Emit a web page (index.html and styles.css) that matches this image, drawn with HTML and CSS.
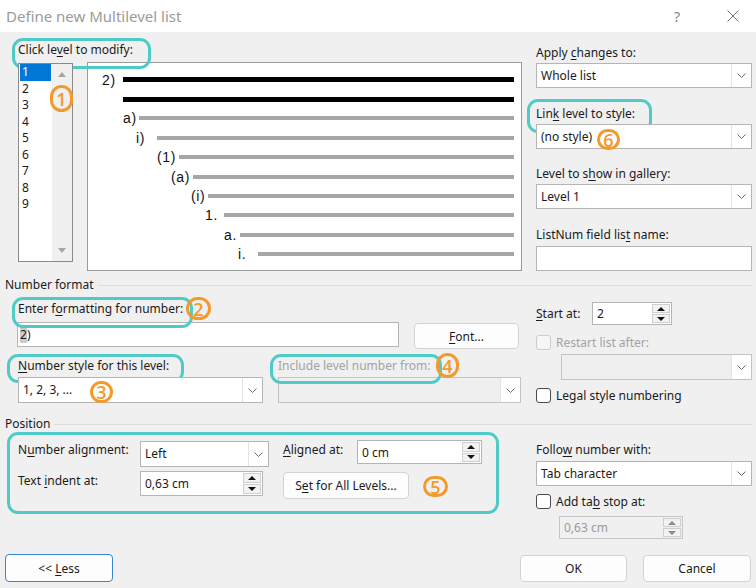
FILE: index.html
```html
<!DOCTYPE html>
<html lang="en">
<head>
<meta charset="utf-8">
<title>Define new Multilevel list</title>
<link rel="stylesheet" href="styles.css">
</head>
<body>
<div class="titlebar">
  <span class="title">Define new Multilevel list</span>
  <span class="help">?</span>
  <svg class="close" width="12" height="12" viewBox="0 0 12 12"><path d="M0.5 0.5 L11.5 11.5 M11.5 0.5 L0.5 11.5" stroke="#777" stroke-width="1" fill="none"/></svg>
</div>

<div class="content">
  <section class="top">
    <div class="left">
      <div class="lbl hl h1">Click le<u>v</u>el to modify:</div>
      <div class="toprow">
        <div class="levels">
          <ul class="levlist">
            <li class="sel">1</li><li>2</li><li>3</li><li>4</li><li>5</li><li>6</li><li>7</li><li>8</li><li>9</li>
          </ul>
          <div class="vscroll">
            <span class="tri-up"></span>
            <span class="tri-dn"></span>
          </div>
          <span class="badge b1">1</span>
        </div>
        <div class="preview">
          <div class="pr r1 black"><span class="n">2)</span><span class="ln"></span></div>
          <div class="pr r2 black"><span class="n"></span><span class="ln"></span></div>
          <div class="pr r3"><span class="n">a)</span><span class="ln"></span></div>
          <div class="pr r4"><span class="n">i)</span><span class="ln"></span></div>
          <div class="pr r5"><span class="n">(1)</span><span class="ln"></span></div>
          <div class="pr r6"><span class="n">(a)</span><span class="ln"></span></div>
          <div class="pr r7"><span class="n">(i)</span><span class="ln"></span></div>
          <div class="pr r8"><span class="n">1.</span><span class="ln"></span></div>
          <div class="pr r9"><span class="n">a.</span><span class="ln"></span></div>
          <div class="pr r10"><span class="n">i.</span><span class="ln"></span></div>
        </div>
      </div>
    </div>
    <div class="right rtop">
      <div class="lbl">Apply <u>c</u>hanges to:</div>
      <div class="select"><span class="val">Whole list</span><span class="dd"><svg width="9" height="5" viewBox="0 0 9 5"><path d="M0.5 0.5 L4.5 4.5 L8.5 0.5" stroke="#6a6a6a" fill="none"/></svg></span></div>
      <div class="lbl g2 hl h2">Lin<u>k</u> level to style:</div>
      <div class="select rel"><span class="val">(no style)</span><span class="dd"><svg width="9" height="5" viewBox="0 0 9 5"><path d="M0.5 0.5 L4.5 4.5 L8.5 0.5" stroke="#6a6a6a" fill="none"/></svg></span><span class="badge b6">6</span></div>
      <div class="lbl g3">Level to s<u>h</u>ow in gallery:</div>
      <div class="select"><span class="val">Level 1</span><span class="dd"><svg width="9" height="5" viewBox="0 0 9 5"><path d="M0.5 0.5 L4.5 4.5 L8.5 0.5" stroke="#6a6a6a" fill="none"/></svg></span></div>
      <div class="lbl g4">ListNum field lis<u>t</u> name:</div>
      <div class="input listnum"></div>
    </div>
  </section>

  <div class="sechead">Number format</div>

  <section class="numfmt">
    <div class="left">
      <div class="lbl hl h3 rel">Enter f<u>o</u>rmatting for number:<span class="badge b2">2</span></div>
      <div class="fmtrow">
        <div class="input fmt"><span class="selchar">2</span>)</div>
        <div class="btn font"><span><u>F</u>ont...</span></div>
      </div>
      <div class="stylegrid">
        <div class="lbl hl h4"><u>N</u>umber style for this level:</div>
        <div class="lbl dis hl h5 rel">Include level number from:<span class="badge b4">4</span></div>
        <div class="select rel"><span class="val">1, 2, 3, ...</span><span class="dd"><svg width="9" height="5" viewBox="0 0 9 5"><path d="M0.5 0.5 L4.5 4.5 L8.5 0.5" stroke="#6a6a6a" fill="none"/></svg></span><span class="badge b3">3</span></div>
        <div class="select disabled"><span class="val"></span><span class="dd"><svg width="9" height="5" viewBox="0 0 9 5"><path d="M0.5 0.5 L4.5 4.5 L8.5 0.5" stroke="#6a6a6a" fill="none"/></svg></span></div>
      </div>
    </div>
    <div class="right rfmt">
      <div class="startrow">
        <span class="startlbl"><u>S</u>tart at:</span>
        <div class="spin start"><span class="val">2</span><span class="spinbtns"><span class="sb up"></span><span class="sb dn"></span></span></div>
      </div>
      <div class="chkrow restart dis"><span class="chk off"></span><span>Restart list after:</span></div>
      <div class="select disabled restartsel"><span class="val"></span><span class="dd"><svg width="9" height="5" viewBox="0 0 9 5"><path d="M0.5 0.5 L4.5 4.5 L8.5 0.5" stroke="#6a6a6a" fill="none"/></svg></span></div>
      <div class="chkrow legal"><span class="chk"></span><span>Legal style numbering</span></div>
    </div>
  </section>

  <div class="sechead pos">Position</div>

  <section class="position">
    <div class="left">
      <div class="posgrid">
        <div class="lbl">N<u>u</u>mber alignment:</div>
        <div class="select align"><span class="val">Left</span><span class="dd"><svg width="9" height="5" viewBox="0 0 9 5"><path d="M0.5 0.5 L4.5 4.5 L8.5 0.5" stroke="#6a6a6a" fill="none"/></svg></span></div>
        <div class="lbl c3"><u>A</u>ligned at:</div>
        <div class="spin aligned"><span class="val">0 cm</span><span class="spinbtns"><span class="sb up"></span><span class="sb dn"></span></span></div>
        <div class="lbl">Text <u>i</u>ndent at:</div>
        <div class="spin indent"><span class="val">0,63 cm</span><span class="spinbtns"><span class="sb up"></span><span class="sb dn"></span></span></div>
        <div class="setcell">
          <div class="btn setall"><span>S<u>e</u>t for All Levels...</span></div>
          <span class="badge b5">5</span>
        </div>
      </div>
    </div>
    <div class="right rpos">
      <div class="lbl">Follo<u>w</u> number with:</div>
      <div class="select"><span class="val">Tab character</span><span class="dd"><svg width="9" height="5" viewBox="0 0 9 5"><path d="M0.5 0.5 L4.5 4.5 L8.5 0.5" stroke="#6a6a6a" fill="none"/></svg></span></div>
      <div class="chkrow addtab"><span class="chk"></span><span>Add ta<u>b</u> stop at:</span></div>
      <div class="spin tabstop disabled"><span class="val">0,63 cm</span><span class="spinbtns"><span class="sb up"></span><span class="sb dn"></span></span></div>
    </div>
  </section>

  <div class="bottom">
    <div class="btn less"><span>&lt;&lt; <u>L</u>ess</span></div>
    <div class="btn ok"><span>OK</span></div>
    <div class="btn cancel"><span>Cancel</span></div>
  </div>
</div>
</body>
</html>
```

FILE: styles.css
```css
* { box-sizing: border-box; }
html, body { margin: 0; padding: 0; }
body {
  width: 756px;
  height: 588px;
  overflow: hidden;
  background: #f0f0f0;
  font-family: "Noto Sans", "Open Sans", sans-serif;
  font-size: 12px;
  color: #1b1b1b;
}
u { text-decoration-thickness: 1px; text-underline-offset: 2px; }

/* title bar */
.titlebar {
  height: 32px;
  background: #fff;
  display: flex;
  align-items: center;
  padding-left: 6px;
}
.title { flex: 1; font-size: 15px; color: #9b9b9b; }
.help { width: 14px; text-align: center; font-size: 15px; color: #8c8c8c; }
.close { margin-left: 43px; margin-right: 17px; }

.content { padding: 0 4px 0 5px; }

.lbl { line-height: 20px; white-space: nowrap; }
.dis { color: #a3a3a3; }
.rel { position: relative; }

/* annotation highlights */
.hl { position: relative; }
.hl::after {
  content: "";
  position: absolute;
  left: var(--l);
  top: var(--t);
  width: var(--w);
  height: var(--h);
  border: 3px solid #4ecbc6;
  border-radius: 11px;
  pointer-events: none;
}
.h1 { --l: -6px; --t: -2px; --w: 133px; --h: 25px; }
.h2 { --l: -9px; --t: -5px; --w: 119px; --h: 28px; }
.h3 { --l: -6px; --t: -2px; --w: 175px; --h: 25px; }
.h4 { --l: -11px; --t: -2px; --w: 171px; --h: 23px; }
.h5 { --l: -8px; --t: -2px; --w: 166px; --h: 24px; }

.badge {
  position: absolute;
  display: flex;
  align-items: center;
  justify-content: center;
  width: 23px;
  height: 24px;
  border: 3px solid #f39a2d;
  border-radius: 12px;
  color: #f39a2d;
  font-family: "Open Sans", "Noto Sans", sans-serif;
  font-weight: 600;
  font-size: 18px;
  line-height: 1;
  z-index: 2;
}
.b1 { left: 31px; top: 21px; height: 27px; }
.b2 { left: 168px; top: -2px; width: 25px; height: 23px; }
.b3 { left: 71px; top: 3px; height: 22px; }
.b4 { left: 158px; top: -3px; height: 25px; }
.b5 { position: static; margin-left: 14px; margin-top: 5px; width: 25px; height: 21px; }
.b6 { left: 60px; top: 4px; height: 21px; }

/* top section */
section { display: flex; }
.left { width: 517px; }
.right { width: 216px; margin-left: 14px; }

.top .left { padding-top: 8px; }
.top .left > .lbl { margin-left: 13px; }
.toprow { display: flex; margin-top: 2px; padding-left: 13px; }

.levels {
  position: relative;
  width: 55px;
  height: 199px;
  margin-top: 1px;
  border: 1px solid #8a8a8a;
  background: #fff;
  display: flex;
}
.levlist { list-style: none; margin: 0; padding: 0 0 0 1px; width: 33px; }
.levlist li { height: 16.5px; line-height: 16.5px; padding-left: 2px; width: 31px; }
.levlist li.sel { background: #0078d7; color: #fff; }
.vscroll {
  width: 20px;
  background: #f0f0f0;
  display: flex;
  flex-direction: column;
  align-items: center;
  justify-content: space-between;
  padding: 8px 0 8px;
}
.tri-up, .tri-dn { width: 0; height: 0; border-left: 4px solid transparent; border-right: 4px solid transparent; }
.tri-up { border-bottom: 5px solid #a6a6a6; }
.tri-dn { border-top: 5px solid #a6a6a6; }

.preview {
  margin-left: 14px;
  width: 435px;
  height: 209px;
  border: 1px solid #9a9a9a;
  background: #fff;
  padding-top: 7px;
  font-family: "Liberation Sans", Arial, sans-serif;
  font-size: 14px;
  letter-spacing: 0.6px;
  color: #111;
}
.pr { display: flex; align-items: center; height: 19.4px; padding-left: var(--x); padding-right: 7px; }
.pr .n { width: var(--w); flex: none; white-space: nowrap; line-height: 16px; }
.pr .ln { flex: 1; height: 4px; background: #a6a6a6; }
.pr.black .ln { height: 5px; background: #000; }
.r1 { --x: 14px; --w: 21px; }
.r2 { --x: 35px; --w: 0px; }
.r3 { --x: 35px; --w: 16px; }
.r4 { --x: 48px; --w: 21px; }
.r5 { --x: 69px; --w: 22px; }
.r6 { --x: 83px; --w: 22px; }
.r7 { --x: 103px; --w: 17px; }
.r8 { --x: 117px; --w: 19px; }
.r9 { --x: 136px; --w: 16px; }
.r10 { --x: 150px; --w: 20px; }

/* controls */
.select {
  display: flex;
  height: 25px;
  background: #fff;
  border: 1px solid #b5b5b5;
}
.select .val { flex: 1; padding-left: 4px; line-height: 23px; white-space: nowrap; }
.select .dd {
  width: 20px;
  border-left: 1px solid #e4e4e4;
  background: #fff;
  display: flex;
  align-items: center;
  justify-content: center;
}
.select.disabled { background: #efefef; border-color: #c3c3c3; }
.input { height: 25px; background: #fff; border: 1px solid #b5b5b5; }

.spin {
  display: flex;
  background: #fff;
  border: 1px solid #b5b5b5;
}
.spin .val { flex: 1; padding-left: 4px; display: flex; align-items: center; white-space: nowrap; }
.spinbtns { width: 19px; display: flex; flex-direction: column; padding: 1px 1px 1px 0; gap: 1px; }
.sb {
  flex: 1;
  border: 1px solid #cfcfcf;
  background: #f2f2f2;
  display: flex;
  align-items: center;
  justify-content: center;
}
.sb::before { content: ""; width: 0; height: 0; border-left: 4px solid transparent; border-right: 4px solid transparent; }
.sb.up::before { border-bottom: 4px solid #111; }
.sb.dn::before { border-top: 4px solid #111; }
.spin.disabled { background: #f0f0f0; border-color: #c6c6c6; color: #9a9a9a; }
.spin.disabled .sb.up::before { border-bottom-color: #8c8c8c; }
.spin.disabled .sb.dn::before { border-top-color: #8c8c8c; }

.btn {
  display: flex;
  align-items: center;
  justify-content: center;
  background: #fdfdfd;
  border: 1px solid #d3d3d3;
  border-radius: 4px;
  white-space: nowrap;
}

.chkrow { display: flex; align-items: center; height: 20px; }
.chk {
  width: 15px;
  height: 15px;
  border: 1px solid #4a4a4a;
  border-radius: 3px;
  background: #fff;
  margin-right: 5px;
}
.chk.off { border-color: #cccccc; background: #f6f6f6; }

/* right column, top */
.rtop { padding-top: 11px; }
.g2 { margin-top: 16px; }
.g3 { margin-top: 15px; }
.g4 { margin-top: 16px; }
.listnum { margin-top: 1px; }

/* section headers */
.sechead {
  display: flex;
  align-items: center;
  line-height: 18px;
  margin-top: 5px;
}
.sechead::after {
  content: "";
  flex: 1;
  height: 1px;
  background: #dcdcdc;
  margin-left: 4px;
}
.sechead.pos { margin-top: 10px; }

/* number format */
.numfmt .left { padding-left: 13px; }
.numfmt .left > .lbl { margin-top: 5px; }
.fmtrow { display: flex; margin-top: 3px; }
.input.fmt { margin-left: -1px; width: 382px; padding-left: 2px; line-height: 23px; }
.selchar { background: #cccccc; }
.btn.font { margin-left: 15px; margin-top: 1px; width: 105px; height: 26px; }
.stylegrid {
  display: grid;
  grid-template-columns: 245px 243px;
  column-gap: 15px;
  margin-top: 7px;
}
.stylegrid .select { margin-top: 1px; height: 26px; }
.stylegrid .select .val { padding-left: 4px; }

.rfmt { padding-top: 8px; }
.startrow { display: flex; align-items: center; }
.startlbl { width: 56px; }
.spin.start { width: 80px; height: 23px; }
.restart { margin-top: 7px; }
.restartsel { margin-top: 2px; margin-left: 25px; height: 26px; }
.legal { margin-top: 5px; }

/* position */
.position .left { padding-left: 13px; }
.posgrid {
  position: relative;
  margin-top: 7px;
  display: grid;
  grid-template-columns: 122px 129px 88px 125px;
  grid-template-rows: 27px 28px;
  row-gap: 4px;
  align-items: start;
}
.posgrid::after {
  content: "";
  position: absolute;
  left: -11px;
  top: -8px;
  width: 486px;
  height: 76px;
  border: 3px solid #4ecbc6;
  border-radius: 11px;
  pointer-events: none;
}
.select.align { margin-top: 1px; height: 26px; }
.c3 { padding-left: 14px; }
.spin.aligned { height: 24px; }
.spin.indent { width: 123px; height: 25px; }
.setcell { grid-column: 3 / 5; display: flex; padding-left: 14px; align-items: flex-start; }
.btn.setall { width: 126px; height: 27px; margin-top: 1px; }

.rpos { padding-top: 7px; }
.rpos .select { margin-top: 1px; }
.addtab { margin-top: 5px; }
.spin.tabstop { margin-top: 5px; margin-left: 23px; width: 124px; height: 23px; }

/* bottom buttons */
.bottom { display: flex; margin-top: 15px; padding-right: 1px; }
.btn.less { width: 108px; height: 28px; border: 1.5px solid #3a86d6; }
.btn.ok { margin-left: auto; width: 107px; height: 27px; margin-top: 1px; }
.btn.cancel { margin-left: 16px; width: 108px; height: 27px; margin-top: 1px; }
```
